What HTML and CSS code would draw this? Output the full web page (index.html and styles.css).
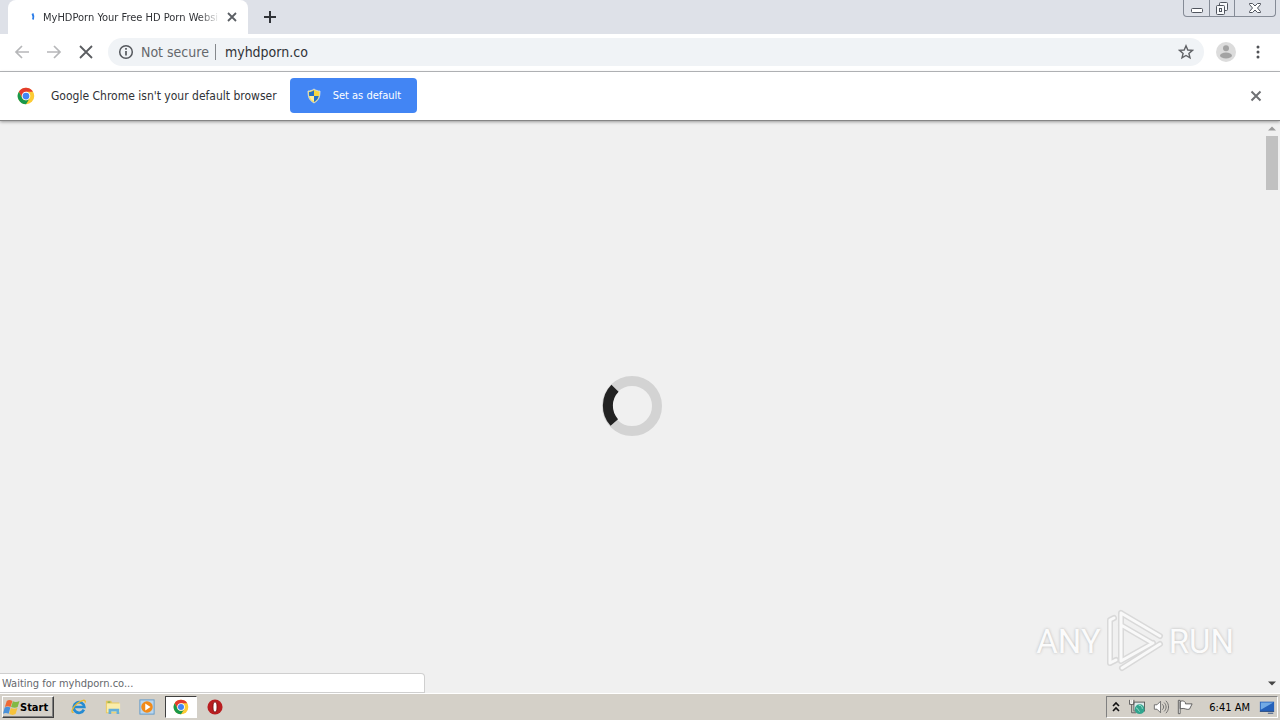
FILE: index.html
```html
<!DOCTYPE html>
<html lang="en">
  <head>
    <meta charset="UTF-8" />
    <meta name="viewport" content="width=device-width, initial-scale=1.0" />
    <title>Browser window</title>

    <link rel="stylesheet" href="styles.css" />
  </head>

  <body>
    <!-- shared logo -->
    <svg class="defs" aria-hidden="true">
      <symbol id="chromeLogo" viewBox="0 0 48 48">
        <circle cx="24" cy="24" r="22" fill="#fccb34" />
        <path d="M24 12.5h18.500A22 22 0 0 0 5 12.500L14 29.700Z" fill="#e33b2e" />
        <path d="M5 12.500 14 29.700A11.500 11.500 0 0 0 34 29.700L24 46A22 22 0 0 1 5 12.500Z" fill="#18984b" />
        <circle cx="24" cy="24" r="11.500" fill="#fff" />
        <circle cx="24" cy="24" r="9" fill="#4285f4" />
      </symbol>
    </svg>

    <!-- Tab strip -->
    <header class="tab-strip">
      <div class="tab">
        <svg class="tab-spinner" viewBox="0 0 16 16">
          <path d="M12.500 4.500c1 2 1.200 4 .5 6" fill="none" stroke="#2b7de9" stroke-width="2" />
        </svg>
        <span class="tab-title">MyHDPorn Your Free HD Porn Websi</span>
        <button class="icon-button tab-close" aria-label="Close tab">
          <svg viewBox="0 0 16 16"><path d="m4 4 8 8m0-8-8 8" stroke="#5b5f64" stroke-width="1.800" /></svg>
        </button>
      </div>
      <button class="icon-button new-tab" aria-label="New tab">
        <svg viewBox="0 0 16 16"><path d="M8 2v12M2 8h12" stroke="#303338" stroke-width="2" /></svg>
      </button>
      <div class="window-buttons">
        <button aria-label="Minimize">
          <svg viewBox="0 0 16 16"><rect x="2.500" y="8.500" width="11" height="4" rx="1" fill="#fff" stroke="#50555e" /></svg>
        </button>
        <button aria-label="Restore">
          <svg viewBox="0 0 16 16" fill="#f8f9fb" stroke="#50555e">
            <rect x="5.500" y="2.500" width="8" height="8" rx="1" />
            <rect x="2.500" y="5.500" width="8" height="9" rx="1" />
            <rect x="5.500" y="8.500" width="2" height="3" />
          </svg>
        </button>
        <button class="window-close" aria-label="Close">
          <svg viewBox="0 0 16 16"><path d="M2.500 3.500h3L8 6l2.500-2.500h3v1L10.500 8l3 3.500v1h-3L8 10l-2.500 2.500h-3v-1l3-3.500-3-3.500Z" fill="#fff" stroke="#50555e" /></svg>
        </button>
      </div>
    </header>

    <!-- Toolbar -->
    <nav class="toolbar">
      <button class="icon-button" aria-label="Back">
        <svg viewBox="0 0 16 16"><path d="M15 8H2m6-6L2 8l6 6" fill="none" stroke="#b6b7b9" stroke-width="1.700" /></svg>
      </button>
      <button class="icon-button" aria-label="Forward">
        <svg viewBox="0 0 16 16"><path d="M1 8h13M8 2l6 6-6 6" fill="none" stroke="#b6b7b9" stroke-width="1.700" /></svg>
      </button>
      <button class="icon-button" aria-label="Stop">
        <svg viewBox="0 0 16 16"><path d="m2 2 12 12m0-12L2 14" stroke="#5b5d61" stroke-width="1.800" /></svg>
      </button>
      <div class="omnibox">
        <button class="security">
          <svg viewBox="0 0 16 16">
            <circle cx="8" cy="8" r="6.300" fill="none" stroke="#55585d" stroke-width="1.500" />
            <path d="M8 7v4.500M8 4v1.700" stroke="#55585d" stroke-width="1.700" />
          </svg>
          Not secure
        </button>
        <input class="address" type="text" value="myhdporn.co" aria-label="Address" />
        <button class="icon-button" aria-label="Bookmark">
          <svg viewBox="0 0 16 16"><path d="m8 1.800 1.800 4.200 4.600.4-3.500 3 1.100 4.500L8 11.500l-4 2.400 1.100-4.500-3.500-3 4.600-.4Z" fill="none" stroke="#606266" stroke-width="1.400" /></svg>
        </button>
      </div>
      <button class="profile" aria-label="Profile">
        <svg viewBox="0 0 20 20">
          <circle cx="10" cy="10" r="10" fill="#dcdcdc" />
          <circle cx="10" cy="6.200" r="3" fill="#a3a3a3" />
          <ellipse cx="10" cy="13.500" rx="6" ry="3" fill="#a3a3a3" />
        </svg>
      </button>
      <button class="icon-button" aria-label="Menu">
        <svg viewBox="0 0 16 16" fill="#505256">
          <circle cx="8" cy="3" r="1.500" />
          <circle cx="8" cy="8" r="1.500" />
          <circle cx="8" cy="13" r="1.500" />
        </svg>
      </button>
    </nav>

    <!-- Default browser prompt -->
    <section class="infobar">
      <svg class="infobar-logo"><use href="#chromeLogo" /></svg>
      <span class="infobar-text">Google Chrome isn't your default browser</span>
      <button class="default-button">
        <svg viewBox="0 0 16 16">
          <path d="M8 1c2 1.500 4 2 6 2 0 6-1 9-6 12C3 12 2 9 2 3c2 0 4-.5 6-2Z" fill="#f5d742" />
          <path d="M8 2.200V8H3.200C3 6.500 3 5.500 3 4c2 0 3.500-.7 5-1.800ZM8 8h4.700c-.5 2.700-1.700 4.300-4.700 6Z" fill="#2471c8" />
          <path d="M3.500 8H8v5.500C5 12 4 10.500 3.500 8Z" fill="#fff0a0" />
          <path d="M8 1c2 1.500 4 2 6 2 0 6-1 9-6 12C3 12 2 9 2 3c2 0 4-.5 6-2Z" fill="none" stroke="#d8e3ed" stroke-width=".8" />
        </svg>
        Set as default
      </button>
      <button class="icon-button infobar-close" aria-label="Dismiss">
        <svg viewBox="0 0 16 16"><path d="m3.500 3.500 9 9m0-9-9 9" stroke="#6f7174" stroke-width="2" /></svg>
      </button>
    </section>

    <!-- Page -->
    <main class="page">
      <div class="loading">
        <svg class="loader" viewBox="0 0 60 60" fill="none" stroke-width="10">
          <circle cx="30" cy="30" r="25" stroke="#d3d3d3" />
          <path d="M13 12.300A25 25 0 0 0 12.300 46.500" stroke="#222" />
        </svg>
      </div>
      <div class="scrollbar">
        <svg viewBox="0 0 14 14"><path d="m3 9 4-4 4 4Z" fill="#9b9b9b" /></svg>
        <div class="scroll-thumb"></div>
        <svg class="scroll-down" viewBox="0 0 14 14"><path d="m3 5 4 4 4-4Z" fill="#454545" /></svg>
      </div>
      <div class="watermark">
        <span>ANY</span>
        <svg viewBox="0 0 60 64" fill="none" stroke-linejoin="round" stroke-linecap="round">
          <g stroke="#d9d9d9" stroke-width="6">
            <path d="M9 9 5 11v43l6-3" />
            <path d="M16 4v48l32-18M16 4l39 23M17 59l38-24M16 16l31 18" />
          </g>
          <g stroke="#f9f9f9" stroke-width="3">
            <path d="M9 9 5 11v43l6-3" />
            <path d="M16 4v48l32-18M16 4l39 23M17 59l38-24M16 16l31 18" />
          </g>
        </svg>
        <span>RUN</span>
      </div>
      <div class="status">Waiting for myhdporn.co...</div>
    </main>

    <!-- Taskbar -->
    <footer class="taskbar">
      <button class="start">
        <svg viewBox="0 0 18 18">
          <path d="M4 2c2-1.500 4-1 6 0L8 8.500c-2-1-4-1-6 0Z" fill="#ef6a35" />
          <path d="M10.500 2.500c2 1 4.500 1 7-.5l-2 6.500c-2 1.300-4.500 1-7 0Z" fill="#82b944" />
          <path d="M1.800 9c2-1 4-1 6 0L6 15.500c-2-1-4-1-6 0Z" fill="#4a91d9" />
          <path d="M8.300 9.500c2 1 4.500 1.200 7 0l-2 6.500c-2 1.200-4.500 1-6.800 0Z" fill="#f5c23b" />
        </svg>
        Start
      </button>
      <div class="quick-launch">
        <button aria-label="Internet Explorer">
          <svg viewBox="0 0 18 18" fill="none">
            <path d="M14.500 12A6 6 0 1 1 15 9H4.500" stroke="#258bd2" stroke-width="3" />
            <path d="M3 15C-1 16 2 9 7 5s10-5 9-1" stroke="#e8b82d" stroke-width="1.500" />
          </svg>
        </button>
        <button aria-label="Explorer">
          <svg viewBox="0 0 18 18">
            <path d="M1 2h6l1 2h8v12H1Z" fill="#e7c75d" />
            <path d="M2 5h15v10H2Z" fill="#faedaa" />
            <path d="M4 17v-6h12v6h-3v-3H7v3Z" fill="#65afd9" />
            <path d="M3 3.500h3" stroke="#52a852" />
          </svg>
        </button>
        <button aria-label="Media Player">
          <svg viewBox="0 0 18 18">
            <rect x="1" y="1" width="16" height="16" fill="#b9d6ee" stroke="#5e97c8" />
            <circle cx="9" cy="9" r="6.500" fill="#f18a19" />
            <path d="m7 5 6 4-6 4Z" fill="#fff" />
          </svg>
        </button>
        <button class="active" aria-label="Chrome">
          <svg><use href="#chromeLogo" /></svg>
        </button>
        <button aria-label="Opera">
          <svg viewBox="0 0 18 18">
            <circle cx="9" cy="9" r="8.500" fill="#b91d20" />
            <ellipse cx="9" cy="9" rx="2.300" ry="5.800" fill="#fff" stroke="#74100f" />
          </svg>
        </button>
      </div>
      <div class="tray">
        <svg class="tray-more" viewBox="0 0 10 16"><path d="m2 7 3-3 3 3M2 12l3-3 3 3" fill="none" stroke="#111" stroke-width="1.600" /></svg>
        <svg viewBox="0 0 18 18">
          <rect x="5.500" y="3.500" width="12" height="10" fill="#dceaea" stroke="#555" />
          <path d="M.500 1v5h5V1M3 6v9.500h5" fill="none" stroke="#555" />
          <path d="M2 1v4h2V1" fill="none" stroke="#fff" />
          <circle cx="12" cy="11.500" r="5.500" fill="#31a58e" />
          <path d="M8 10c2 0 2 3 4 4M11 7c3 0 4 2 4 4" fill="none" stroke="#b2e4d9" />
        </svg>
        <svg viewBox="0 0 18 18" fill="none" stroke="#666">
          <path d="M1.500 6.500h3l4-4v13l-4-4h-3Z" fill="#fff" />
          <path d="M10.500 6c2 2 2 4 0 6M12.500 4c3 3 3 7 0 10M14.500 2c4 4 4 10 0 14" />
        </svg>
        <svg viewBox="0 0 18 18"><path d="M1.500 1.500h2v15h-2ZM3.500 3c3-2 5 0 6 1v1.500h7.500l-3 6c-4 1-5-2-10.500-.5Z" fill="#fff" stroke="#555" /></svg>
        <time class="clock">6:41 AM</time>
        <svg viewBox="0 0 18 18">
          <path d="M1 3h16v11H1Z" fill="#2461ba" />
          <path d="M2 4h14L2 12Z" fill="#71aae5" />
          <path d="M1 14h16M10 16h6" stroke="#24477d" />
        </svg>
      </div>
    </footer>
  </body>
</html>
```
FILE: styles.css
```css
* {
  box-sizing: border-box;
}

body {
  margin: 0;
  height: 100vh;
  display: flex;
  flex-direction: column;
  overflow: hidden;
  background-color: #f0f0f0;
  font-family: "DejaVu Sans Condensed", "Noto Sans", sans-serif;
  font-size: 11px;
  color: #303236;
}

button,
input {
  margin: 0;
  padding: 0;
  border: 0;
  background: none;
  font: inherit;
  color: inherit;
}

svg {
  display: block;
  flex: none;
  width: 16px;
  height: 16px;
}

.defs {
  position: absolute;
  width: 0;
  height: 0;
}

.icon-button {
  flex: none;
  width: 16px;
  height: 16px;
}

/* Tab strip */
.tab-strip {
  flex: none;
  display: flex;
  align-items: center;
  height: 34px;
  padding-left: 8px;
  background-color: #dee1e8;
}

.tab {
  display: flex;
  align-items: center;
  width: 240px;
  height: 34px;
  padding: 0 8px 0 12px;
  border-radius: 8px 8px 0 0;
  background-color: #fff;
}

.tab-spinner {
  margin-right: 7px;
}

.tab-title {
  flex: 1;
  white-space: nowrap;
  mask-image: linear-gradient(to right, #000 88%, transparent);
}

.tab-close {
  margin-left: 4px;
}

.new-tab {
  margin-left: 14px;
}

.window-buttons {
  display: flex;
  align-self: flex-start;
  height: 17px;
  margin-left: auto;
  margin-right: 4px;
  border: 1px solid #858b96;
  border-top: 0;
  border-radius: 0 0 4px 4px;
}

.window-buttons button {
  display: flex;
  justify-content: center;
  width: 25px;
}

.window-buttons button + button {
  border-left: 1px solid #858b96;
}

.window-buttons .window-close {
  width: 41px;
}

/* Toolbar */
.toolbar {
  flex: none;
  display: flex;
  align-items: center;
  gap: 16px;
  height: 38px;
  padding: 0 14px 2px;
  border-bottom: 1px solid #b3b5b8;
  background-color: #fff;
}

.omnibox {
  flex: 1;
  display: flex;
  align-items: center;
  height: 28px;
  margin-left: -2px;
  padding: 0 10px;
  border-radius: 14px;
  background-color: #f0f3f6;
  font-size: 14px;
}

.security {
  display: flex;
  align-items: center;
  gap: 7px;
  padding-right: 6px;
  border-right: 1px solid #85888c;
  line-height: 16px;
  color: #65686c;
}

.address {
  flex: 1;
  min-width: 0;
  padding-left: 9px;
}

.profile {
  width: 20px;
  height: 20px;
  margin-left: -4px;
  margin-right: -2px;
}

.profile svg {
  width: 20px;
  height: 20px;
}

/* Default browser prompt */
.infobar {
  position: relative;
  flex: none;
  display: flex;
  align-items: center;
  height: 49px;
  padding: 0 16px 1px 17px;
  border-bottom: 1px solid #858585;
  background-color: #fff;
  box-shadow: 0 1px 3px #999;
}

.infobar-logo {
  width: 18px;
  height: 18px;
}

.infobar-text {
  margin: 0 13px 0 16px;
  font-size: 12px;
}

.default-button {
  display: flex;
  align-items: center;
  gap: 11px;
  height: 35px;
  padding: 0 16px;
  border-radius: 4px;
  background-color: #4285f4;
  color: #fff;
}

.infobar-close {
  margin-left: auto;
}

/* Page */
.page {
  position: relative;
  flex: 1;
  display: flex;
  min-height: 0;
}

.loading {
  flex: 1;
  display: flex;
  align-items: center;
  justify-content: center;
  padding-bottom: 2px;
}

.loader {
  width: 60px;
  height: 60px;
}

.scrollbar {
  display: flex;
  flex-direction: column;
  align-items: center;
  width: 16px;
}

.scrollbar svg {
  width: 14px;
  height: 15px;
}

.scroll-thumb {
  width: 12px;
  height: 54px;
  background-color: #c1c1c1;
}

.scrollbar .scroll-down {
  margin-top: auto;
  margin-bottom: 2px;
}

.watermark {
  position: absolute;
  right: 46px;
  bottom: 20px;
  display: flex;
  align-items: center;
  gap: 4px;
  font-family: Roboto, sans-serif;
  font-size: 33px;
  color: #fbfbfb;
  text-shadow: 0 0 3px #b5b5b5;
}

.watermark svg {
  width: 60px;
  height: 64px;
}

.status {
  position: absolute;
  left: 0;
  bottom: 0;
  width: 425px;
  height: 20px;
  padding-left: 2px;
  border: 1px solid #cfcfcf;
  border-left: 0;
  border-radius: 0 4px 0 0;
  background-color: #fff;
  line-height: 19px;
  color: #65686c;
}

/* Taskbar */
.taskbar {
  flex: none;
  display: flex;
  align-items: center;
  height: 27px;
  padding: 0 2px;
  border-top: 1px solid #fff;
  background-color: #d4d0c8;
  color: #000;
}

.start {
  display: flex;
  align-items: center;
  width: 52px;
  height: 22px;
  border: 1px solid #fff;
  border-right-color: #404040;
  border-bottom-color: #404040;
  box-shadow: inset -1px -1px #808080;
  font-family: "DejaVu Sans Condensed", sans-serif;
  font-weight: bold;
}

.start svg {
  width: 17px;
  height: 17px;
}

.quick-launch {
  display: flex;
  gap: 2px;
  margin-left: 9px;
}

.quick-launch button {
  display: flex;
  align-items: center;
  justify-content: center;
  width: 32px;
  height: 22px;
}

.quick-launch .active {
  border: 1px solid #404040;
  border-right-color: #fff;
  border-bottom-color: #fff;
  background-color: #fff;
}

.tray {
  display: flex;
  align-items: center;
  gap: 8px;
  height: 22px;
  margin-left: auto;
  padding: 0 2px 0 4px;
  border: 1px solid #808080;
  border-right-color: #fff;
  border-bottom-color: #fff;
}

.tray-more {
  width: 10px;
}

.clock {
  margin: 0 1px 0 8px;
}
```
